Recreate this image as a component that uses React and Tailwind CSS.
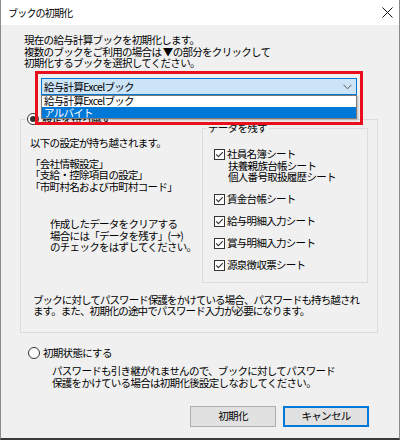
import React from "react";

function Radio({ checked }) {
  return (
    <svg width="12" height="12" viewBox="0 0 12 12" className="shrink-0">
      <circle cx="6" cy="6" r="5.5" fill="#fff" stroke="#333" strokeWidth="1" />
      {checked && <circle cx="6" cy="6" r="3" fill="#333" />}
    </svg>
  );
}

function Check() {
  return (
    <svg width="11" height="11" viewBox="0 0 11 11" className="shrink-0 mt-[0.5px]">
      <rect x="0.5" y="0.5" width="10" height="10" fill="#fff" stroke="#333" strokeWidth="1" />
      <path d="M2.2 5.4 L4.4 7.6 L8.8 3.2" fill="none" stroke="#333" strokeWidth="1.1" />
    </svg>
  );
}

function Item({ lines }) {
  return (
    <div className="flex items-start">
      <Check />
      <div className="ml-[2px]">
        {lines.map((l, i) => (
          <div key={i} className={i > 0 ? "pl-[1px]" : ""}>{l}</div>
        ))}
      </div>
    </div>
  );
}

export default function App() {
  return (
    <div className="w-[400px] h-[440px] overflow-hidden bg-[#f0f0f0] text-black font-['Noto_Sans_CJK_JP','Noto_Sans_CJK_SC',sans-serif] text-[10.5px] leading-[11.5px] tracking-[-0.7px] whitespace-nowrap border-x border-[#8a8a8a] border-b-2 border-b-[#3a3a3a] flex flex-col">
      <div className="h-[25px] bg-white flex items-center justify-between pl-[7px] pr-[6px] shrink-0">
        <span className="text-[10px] tracking-[-0.8px]">ブックの初期化</span>
        <svg width="11" height="11" viewBox="0 0 11 11">
          <path d="M0.5 0.5 L10.5 10.5 M10.5 0.5 L0.5 10.5" stroke="#111" strokeWidth="1" />
        </svg>
      </div>

      <div className="flex-1 flex flex-col pt-[9px] pl-[19px]">
        <div className="ml-[4px]">
          <div>現在の給与計算ブックを初期化します。</div>
          <div>複数のブックをご利用の場合は ▼の部分をクリックして</div>
          <div>初期化するブックを選択してください。</div>
        </div>

        <div className="relative ml-[21px] mt-[9.5px] w-[316px] h-[17px] z-10">
          <div className="h-full border border-[#0078d7] bg-[#cce4f7] flex items-center justify-between pl-[2px] pr-[4px]">
            <span>給与計算Excelブック</span>
            <svg width="9" height="6" viewBox="0 0 9 6">
              <path d="M0.5 0.8 L4.5 4.8 L8.5 0.8" fill="none" stroke="#555" strokeWidth="1" />
            </svg>
          </div>
          <div className="absolute left-0 right-0 top-[17px] bg-white border border-[#7a7a7a] shadow-[1px_1px_2px_rgba(0,0,0,0.25)]">
            <div className="h-[10.5px] leading-[10.5px] pl-[2px]">給与計算Excelブック</div>
            <div className="h-[11.5px] pl-[2px] bg-[#0078d7] text-white">アルバイト</div>
          </div>
          <div className="absolute left-[-6px] top-[-7px] right-[-6px] bottom-[-30px] border-[3px] border-[#e8101c] pointer-events-none" />
        </div>

        <fieldset className="mt-[18px] w-[358px] border border-[#dcdcdc] p-0 m-0">
          <legend className="ml-[5px] pl-[1px] pr-[2px] h-[12px] flex items-center">
            <Radio checked />
            <span className="ml-[3px]">設定を持ち越す</span>
          </legend>
          <div className="px-[9px] pb-[15px]">
            <div className="flex">
              <div className="flex-1 pt-[12px]">
                <div>以下の設定が持ち越されます。</div>
                <div className="mt-[9px]">
                  <div>「会社情報設定」</div>
                  <div>「支給・控除項目の設定」</div>
                  <div>「市町村名および市町村コード」</div>
                </div>
                <div className="mt-[26px] ml-[20px]">
                  <div>作成したデータをクリアする</div>
                  <div>場合には「データを残す」(→)</div>
                  <div>のチェックをはずしてください。</div>
                </div>
              </div>
              <fieldset className="mt-[-3px] w-[166px] border border-[#dcdcdc] p-0 m-0">
                <legend className="ml-[4px] pl-[1px] pr-[2px] h-[12px] leading-[12px]">データを残す</legend>
                <div className="pl-[11px] pt-[14px] pb-[11px] flex flex-col gap-[10.5px]">
                  <Item lines={["社員名簿シート", "扶養親族台帳シート", "個人番号取扱履歴シート"]} />
                  <Item lines={["賃金台帳シート"]} />
                  <Item lines={["給与明細入力シート"]} />
                  <Item lines={["賞与明細入力シート"]} />
                  <Item lines={["源泉徴収票シート"]} />
                </div>
              </fieldset>
            </div>
            <div className="mt-[11px] ml-[3px] tracking-[-0.9px]">
              <div>ブックに対してパスワード保護をかけている場合、パスワードも持ち越され</div>
              <div>ます。また、初期化の途中でパスワード入力が必要になります。</div>
            </div>
          </div>
        </fieldset>

        <div className="mt-[14.5px] ml-[8px] flex items-center">
          <Radio />
          <span className="ml-[3px]">初期状態にする</span>
        </div>
        <div className="mt-[6px] ml-[32px]">
          <div>パスワードも引き継がれませんので、ブックに対してパスワード</div>
          <div>保護をかけている場合は初期化後設定しなおしてください。</div>
        </div>

        <div className="mt-[17.5px] flex justify-end gap-[7px] pr-[30px]">
          <button className="w-[86px] h-[21px] bg-[#e1e1e1] border border-[#adadad] flex items-center justify-center">初期化</button>
          <button className="w-[86px] h-[21px] bg-[#e1e1e1] border-2 border-[#0078d7] flex items-center justify-center">キャンセル</button>
        </div>
      </div>
    </div>
  );
}
